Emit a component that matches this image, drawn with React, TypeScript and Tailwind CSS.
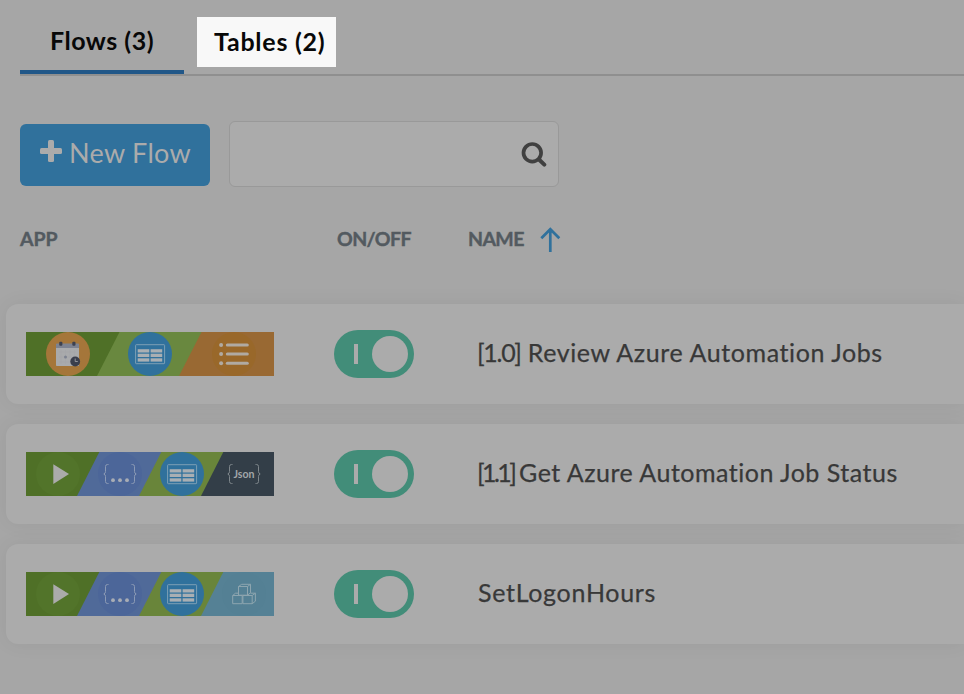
import type { ReactNode } from "react";

function TableGlyph({ cx }: { cx: number }) {
  return (
    <g transform={`translate(${cx} 22)`}>
      <circle r="22" fill="#30719c" />
      <rect x="-14.4" y="-9.3" width="29" height="19" rx="0.6" fill="none" stroke="#7c9fb6" strokeWidth="1" />
      <g fill="#a9afb3">
        <rect x="-12.3" y="-4.8" width="11.6" height="3.3" />
        <rect x="0.6" y="-4.8" width="11.6" height="3.3" />
        <rect x="-12.3" y="-0.3" width="11.6" height="3.3" />
        <rect x="0.6" y="-0.3" width="11.6" height="3.3" />
        <rect x="-12.3" y="4.3" width="11.6" height="3.3" />
        <rect x="0.6" y="4.3" width="11.6" height="3.3" />
      </g>
    </g>
  );
}

function PlayGlyph() {
  return (
    <g>
      <circle cx="32" cy="22" r="22" fill="#52742a" />
      <path d="M27.3 12.3 43 22 27.3 31.9Z" fill="#ababab" />
    </g>
  );
}

function Braces({ cx, stroke }: { cx: number; stroke: string }) {
  return (
    <g transform={`translate(${cx} 22)`} fill="none" stroke={stroke} strokeWidth="1">
      <path d="M-11.5 -9.5h-1q-2 0-2 2v5q0 2-1.700 2.500q1.700 .5 1.700 2.500v5q0 2 2 2h1" />
      <path d="M11.500 -9.500h1q2 0 2 2v5q0 2 1.700 2.500q-1.700 .5-1.700 2.500v5q0 2-2 2h-1" />
    </g>
  );
}

function Dots() {
  return (
    <g>
      <circle cx="94" cy="22" r="22" fill="#4c6699" />
      <Braces cx={94} stroke="#8b9ab5" />
      <g fill="#a9adb5">
        <circle cx="87" cy="28.2" r="1.9" />
        <circle cx="94" cy="28.2" r="1.9" />
        <circle cx="101" cy="28.2" r="1.9" />
      </g>
    </g>
  );
}

function Cubes() {
  return (
    <g>
      <circle cx="218" cy="22" r="22" fill="#548094" />
      <g fill="none" stroke="#8da5af" strokeWidth="1" strokeLinejoin="round">
        <path d="M212.500 14.500h9v8.700h-9zM212.500 14.500l3.200-2.200h8.800l-3 2.200M224.500 12.300v8.500l-3 2.400" />
        <path d="M206.700 23.500h9.500v8.200h-9.500zM206.700 23.500l2.800-2.300h3M216.900 23.500h9.300v8.200h-9.300zM226.200 23.500l3.200-2.300v8l-3.200 2.500M229.400 21.200h-4.900" />
      </g>
    </g>
  );
}

function Strip({ children }: { children: ReactNode }) {
  return (
    <svg width="248" height="44" viewBox="0 0 248 44" className="block shrink-0">
      {children}
    </svg>
  );
}

function ReviewStrip() {
  return (
    <Strip>
      <path d="M0 0h248v44H0z" fill="#4f7027" />
      <path d="M93.500 0H248v44H71z" fill="#69883f" />
      <path d="M175.500 0H248v44h-95z" fill="#996933" />
      <circle cx="42" cy="22" r="22" fill="#a5763a" />
      <rect x="30" y="12" width="23" height="22" rx="0.8" fill="#a9aaac" />
      <path d="M30 12.500q0-1 1-1h21q1 0 1 1V16H30z" fill="#7d8290" />
      <g fill="#3c4150">
        <rect x="33.200" y="9.800" width="3.200" height="4" rx="1" />
        <rect x="46.300" y="9.800" width="3.200" height="4" rx="1" />
      </g>
      <g stroke="#9da0a6" strokeWidth="0.6">
        <path d="M33 20h17M33 25h13M33 30h11M35 18v14M39.500 18v14M44 18v8M48.500 18v6" opacity="0.45" />
      </g>
      <circle cx="39.500" cy="25" r="1.500" fill="#7d8290" />
      <circle cx="49.200" cy="29.500" r="4.900" fill="#3a3e4c" />
      <path d="M49.200 26.500v3h2.600" fill="none" stroke="#9b9da3" strokeWidth="0.9" />
      <TableGlyph cx={124} />
      <circle cx="208" cy="22" r="22" fill="#99682a" />
      <g fill="#b0aaa2">
        <circle cx="195.100" cy="13.100" r="2" />
        <circle cx="195.100" cy="22.100" r="2" />
        <circle cx="195.100" cy="31.200" r="2" />
        <rect x="199.800" y="11.600" width="23" height="3" rx="1.500" />
        <rect x="199.800" y="20.600" width="23" height="3" rx="1.500" />
        <rect x="199.800" y="29.700" width="23" height="3" rx="1.500" />
      </g>
    </Strip>
  );
}

function FourStepStrip({ last }: { last: "json" | "cubes" }) {
  return (
    <Strip>
      <path d="M0 0h248v44H0z" fill="#4f7027" />
      <path d="M73.300 0H248v44H51z" fill="#506a99" />
      <path d="M135.300 0H248v44H113z" fill="#69853a" />
      <path d="M197.300 0H248v44h-73z" fill={last === "json" ? "#333e48" : "#558195"} />
      <PlayGlyph />
      <Dots />
      <TableGlyph cx={156} />
      {last === "json" ? (
        <g>
          <Braces cx={218} stroke="#7e868b" />
          <text x="218" y="26.3" textAnchor="middle" textLength="21" lengthAdjust="spacingAndGlyphs" className="fill-[#a2a7aa] font-['Lato',sans-serif] text-[11.5px] font-bold">
            Json
          </text>
        </g>
      ) : (
        <Cubes />
      )}
    </Strip>
  );
}

function Toggle() {
  return (
    <div role="switch" aria-checked="true" className="flex h-12 w-20 shrink-0 items-center justify-between rounded-full bg-[#428d79] pr-1.5 pl-5">
      <span className="h-5 w-1 bg-[#ababab]" />
      <span className="size-9 rounded-full bg-[#ababab]" />
    </div>
  );
}

function FlowRow({ strip, children }: { strip: ReactNode; children: ReactNode }) {
  return (
    <div className="flex h-[100px] items-center rounded-l-xl bg-[#ababab] pl-5 shadow-[0_0_20px_rgba(0,0,0,0.06)]">
      {strip}
      <div className="ml-[60px]">
        <Toggle />
      </div>
      <span className="mb-1 ml-[63px] text-[25px] leading-[30px] whitespace-nowrap text-[#383838] [-webkit-text-stroke:0.25px_#383838]">
        {children}
      </span>
    </div>
  );
}

export default function App() {
  return (
    <div className="h-[694px] w-[964px] overflow-hidden bg-[#a6a6a6] font-['Lato','Liberation_Sans',sans-serif]">
      <div className="ml-5 flex h-[76px] items-end border-b-2 border-[#8f8f8f] text-[25px] leading-[30px] font-bold text-[#080808]">
        <div className="flex h-[74px] w-[164px] items-center border-b-4 border-[#215788] pt-[10px] pl-[30px]">
          <span className="tracking-[0.5px] whitespace-nowrap">Flows (3)</span>
        </div>
        <div className="mb-[7px] ml-[13px] flex h-[50px] w-[139px] items-center bg-[#f8f8f8] pb-[3px] pl-[17px]">
          <span className="tracking-[0.75px] whitespace-nowrap">Tables (2)</span>
        </div>
      </div>

      <div className="mt-[45px] ml-5 flex h-[66px] items-center">
        <button className="mt-[2px] flex h-[62px] w-[190px] items-center rounded-md bg-[#30719c] pb-1 pl-5 text-[27px] text-[#ababab]">
          <svg width="22" height="22" viewBox="0 0 22 22" className="mb-1" fill="#ababab">
            <rect x="8" width="6" height="22" rx="1.500" />
            <rect y="8" width="22" height="6" rx="1.500" />
          </svg>
          <span className="ml-[7px] tracking-[0.3px] whitespace-nowrap">New Flow</span>
        </button>
        <div className="ml-[19px] flex h-[66px] w-[330px] items-center justify-end rounded-md border border-[#999999] bg-[#ababab] pr-[11px]">
          <svg width="26" height="26" viewBox="0 0 26 26" fill="none" stroke="#404040" strokeLinecap="round">
            <circle cx="11.300" cy="11.800" r="8.800" strokeWidth="3.700" />
            <path d="m18 18.500 5.300 5.100" strokeWidth="4" />
          </svg>
        </div>
      </div>

      <div className="mt-[38px] ml-5 flex h-[30px] items-center text-[19.5px] leading-6 font-bold text-[#535a60]">
        <span className="mb-[2px] w-[317px] tracking-[-0.1px] [-webkit-text-stroke:0.4px_#535a60]">APP</span>
        <span className="mb-[2px] w-[131px] tracking-[-0.6px] [-webkit-text-stroke:0.4px_#535a60]">ON/OFF</span>
        <span className="mb-[2px] w-[72px] tracking-[-0.6px] [-webkit-text-stroke:0.4px_#535a60]">NAME</span>
        <svg width="21" height="26" viewBox="0 0 21 26" fill="none" stroke="#30719c" strokeWidth="2.700">
          <path d="M10.300 25V2.500M1.300 11.200l9-9 9 9" />
        </svg>
      </div>

      <div className="mt-[49px] ml-1.5 flex flex-col gap-5">
        <FlowRow strip={<ReviewStrip />}>
          <span className="tracking-[-1.3px]">[1.0]</span>
          <span className="tracking-[0.6px]"> Review Azure Automation Jobs</span>
        </FlowRow>
        <FlowRow strip={<FourStepStrip last="json" />}>
          <span className="tracking-[-2.6px]">[1.1]</span>
          <span className="-ml-[2px] tracking-[0.5px]"> Get Azure Automation Job Status</span>
        </FlowRow>
        <FlowRow strip={<FourStepStrip last="cubes" />}>
          <span className="ml-px tracking-[0.7px]">SetLogonHours</span>
        </FlowRow>
      </div>
    </div>
  );
}
